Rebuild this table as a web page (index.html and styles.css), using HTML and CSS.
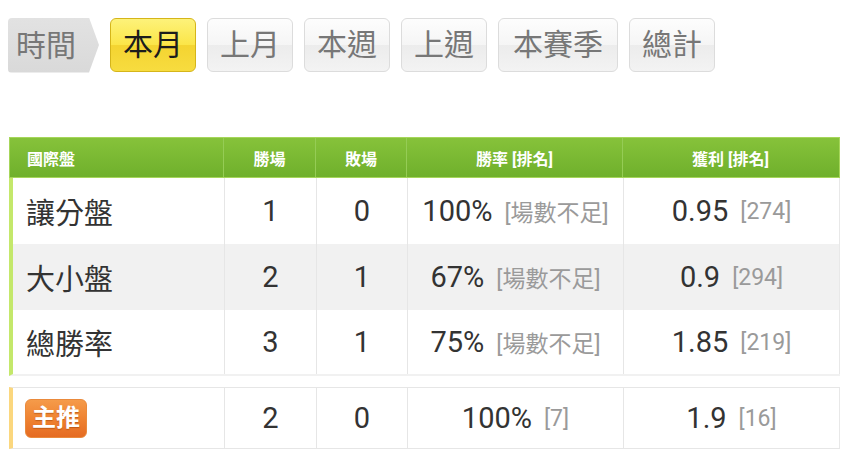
FILE: index.html
```html
<!DOCTYPE html>
<html lang="zh-Hant">
<head>
<meta charset="utf-8">
<title>戰績</title>
<link rel="stylesheet" href="styles.css">
</head>
<body>
<div class="page">
  <div class="tabs">
    <div class="tab-label">時間</div>
    <div class="tab active">本月</div>
    <div class="tab">上月</div>
    <div class="tab">本週</div>
    <div class="tab">上週</div>
    <div class="tab wide">本賽季</div>
    <div class="tab">總計</div>
  </div>

  <div class="table stats">
    <div class="row head">
      <div class="cell first">國際盤</div>
      <div class="cell">勝場</div>
      <div class="cell">敗場</div>
      <div class="cell">勝率 [排名]</div>
      <div class="cell">獲利 [排名]</div>
    </div>
    <div class="row body">
      <div class="cell first">讓分盤</div>
      <div class="cell">1</div>
      <div class="cell">0</div>
      <div class="cell">100%<span class="rank">[場數不足]</span></div>
      <div class="cell">0.95<span class="rank">[274]</span></div>
    </div>
    <div class="row body alt">
      <div class="cell first">大小盤</div>
      <div class="cell">2</div>
      <div class="cell">1</div>
      <div class="cell">67%<span class="rank">[場數不足]</span></div>
      <div class="cell">0.9<span class="rank">[294]</span></div>
    </div>
    <div class="row body last">
      <div class="cell first">總勝率</div>
      <div class="cell">3</div>
      <div class="cell">1</div>
      <div class="cell">75%<span class="rank">[場數不足]</span></div>
      <div class="cell">1.85<span class="rank">[219]</span></div>
    </div>
  </div>

  <div class="table main">
    <div class="row body pick">
      <div class="cell first"><span class="badge">主推</span></div>
      <div class="cell">2</div>
      <div class="cell">0</div>
      <div class="cell">100%<span class="rank">[7]</span></div>
      <div class="cell">1.9<span class="rank">[16]</span></div>
    </div>
  </div>
</div>
</body>
</html>
```

FILE: styles.css
```css
* { box-sizing: border-box; }
html, body { margin: 0; padding: 0; background: #fff; }
body {
  font-family: "Roboto", "Noto Sans CJK TC", sans-serif;
  color: #333;
}
.page { padding: 17px 0 0 8px; }

.tabs {
  display: flex;
  align-items: center;
  gap: 11px;
  height: 56px;
}
.tab-label {
  width: 91px;
  height: 55px;
  background: linear-gradient(#e2e2e2, #d9d9d9);
  color: #777;
  font-size: 30px;
  line-height: 55px;
  padding-left: 8px;
  border-radius: 4px 0 0 4px;
  clip-path: polygon(0 0, 81px 0, 91px 50%, 81px 100%, 0 100%);
}
.tab {
  height: 54px;
  line-height: 52px;
  padding: 0 12px;
  font-size: 30px;
  color: #777;
  border: 1px solid #dcdcdc;
  border-radius: 6px;
  background: linear-gradient(#fdfdfd 0%, #f5f5f5 50%, #ececec 51%, #f3f3f3 100%);
}
.tab.wide { padding: 0 14px; }
.tab.active {
  color: #1c1c1c;
  border-color: #d5b51a;
  background: linear-gradient(#fdf27a 0%, #fbe548 50%, #f4d431 51%, #f7dc3f 100%);
}

.table { width: 831px; margin-left: 1px; }
.table.stats { margin-top: 64px; }
.table.main { margin-top: 11px; }

.row {
  display: grid;
  grid-template-columns: 212px 92px 91px 216px 216px;
}
.cell {
  display: flex;
  align-items: center;
  justify-content: center;
  border-right: 1px solid #e6e6e6;
}
.cell.first { justify-content: flex-start; }

.row.head {
  height: 41px;
  border: 1px solid #a6d65a;
  background: linear-gradient(#86c23a 0%, #6fb02c 100%);
  grid-template-columns: 214px 92px 91px 216px 215px;
}
.row.head .cell {
  color: #fff;
  font-size: 16px;
  font-weight: bold;
  border-right: 1px solid #95cc55;
}
.row.head .cell:last-child { border-right: none; }
.row.head .cell.first { padding-left: 17px; }

.row.body {
  height: 66px;
  border-left: 4px solid #c4e86b;
  background: #fff;
  font-size: 29px;
  color: #333;
}
.row.body.alt { background: #f1f1f1; }
.row.body.last { border-bottom: 2px solid #f1f1f1; }
.row.body .cell.first { padding-left: 13px; }
.row.body .cell:last-child { border-right: 1px solid #e8e8e8; }

.rank {
  font-size: 23px;
  color: #9a9a9a;
  margin-left: 12px;
}

.row.pick {
  height: 62px;
  border-left-color: #fbd77e;
  border-top: 1px solid #e6e6e6;
  border-bottom: 1px solid #e6e6e6;
}
.row.pick .cell.first { padding-left: 12px; }
.badge {
  display: inline-block;
  height: 39px;
  line-height: 37px;
  padding: 0 6px;
  font-size: 24px;
  font-weight: bold;
  color: #fff;
  border-radius: 6px;
  border: 1px solid #ea8a3c;
  background: linear-gradient(#f59b4a 0%, #ef8332 50%, #e56b22 100%);
  text-shadow: 0 1px 1px rgba(150, 60, 0, 0.5);
}
```
